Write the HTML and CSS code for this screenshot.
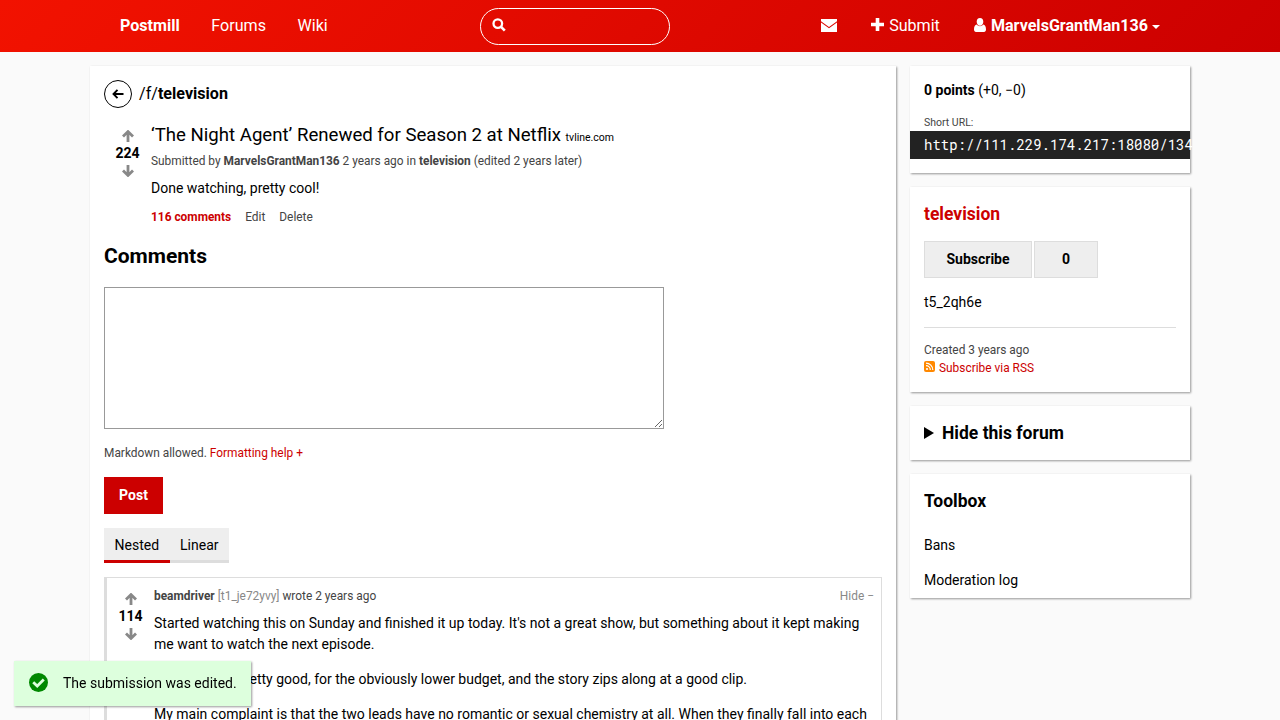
FILE: index.html
```html
<!DOCTYPE html>
<html lang="en">
<head>
<meta charset="utf-8">
<title>‘The Night Agent’ Renewed for Season 2 at Netflix</title>
<link rel="stylesheet" href="styles.css">
</head>
<body>
<svg class="defs" aria-hidden="true">
  <symbol id="arrow-up" viewBox="0 0 12 12"><path d="M6 1.6V12M1 6.6L6 1.6L11 6.6" fill="none" stroke="currentColor" stroke-width="2.8"/></symbol>
  <symbol id="arrow-down" viewBox="0 0 12 12"><path d="M6 10.4V0M1 5.4L6 10.4L11 5.4" fill="none" stroke="currentColor" stroke-width="2.8"/></symbol>
</svg>
<header class="site-nav">
  <nav class="nav-inner">
    <a class="nav-link brand">Postmill</a>
    <a class="nav-link forums">Forums</a>
    <a class="nav-link">Wiki</a>
    <div class="search">
      <svg class="search-icon" viewBox="0 0 14 14"><circle cx="5.8" cy="5.6" r="4.3" fill="none" stroke="currentColor" stroke-width="2.3"/><path d="M8.8 8.6L12.8 12.6" stroke="currentColor" stroke-width="2.6"/></svg>
    </div>
    <div class="nav-user">
      <a class="mail"><svg class="mail-icon" viewBox="0 0 16 13"><path d="M0 0H16V2.2L8 8L0 2.2ZM0 3.4L8 9.2L16 3.4V13H0Z" fill="currentColor"/></svg></a>
      <a class="nav-item submit"><svg class="plus-icon" viewBox="0 0 13 13"><path d="M6.5 0V13M0 6.5H13" stroke="currentColor" stroke-width="3.6"/></svg>Submit</a>
      <a class="nav-item account"><svg class="user-icon" viewBox="0 0 12 14"><path d="M6 0C8.200 0 9.300 1.600 9.300 3.700S8 7.800 6 7.800 2.700 5.800 2.700 3.700 3.800 0 6 0Z" fill="currentColor"/><path d="M2.800 6.500C3.600 7.700 4.700 8.200 6 8.200S8.400 7.700 9.200 6.500C11 6.900 12 8.700 12 11.500C12 13 11.200 14 10 14H2C.800 14 0 13 0 11.500C0 8.700 1 6.900 2.800 6.500Z" fill="currentColor"/></svg><b>MarvelsGrantMan136</b><i class="caret"></i></a>
    </div>
  </nav>
</header>
<div class="site-content">
  <main class="card main">
    <div class="forum-head">
      <span class="back"><svg class="back-icon" viewBox="0 0 12 10"><path d="M5.500 .9L1.500 5L5.500 9.100M1.500 5H11.500" fill="none" stroke="currentColor" stroke-width="1.900"/></svg></span>
      <span class="forum-name">/f/<b>television</b></span>
    </div>
    <article class="submission">
      <div class="vote">
        <svg class="arrow"><use href="#arrow-up"/></svg>
        <b class="score">224</b>
        <svg class="arrow"><use href="#arrow-down"/></svg>
      </div>
      <div class="submission-body">
        <h1 class="title">‘The Night Agent’ Renewed for Season 2 at Netflix <small class="host">tvline.com</small></h1>
        <p class="meta">Submitted by <b>MarvelsGrantMan136</b> 2 years ago in <b>television</b> (edited 2 years later)</p>
        <p class="text">Done watching, pretty cool!</p>
        <p class="actions"><b class="red">116 comments</b><span>Edit</span><span>Delete</span></p>
      </div>
    </article>
    <h2 class="comments-title">Comments</h2>
    <textarea class="comment-input"></textarea>
    <p class="help">Markdown allowed. <a class="red">Formatting help +</a></p>
    <button class="post">Post</button>
    <div class="tabs"><a class="tab active">Nested</a><a class="tab">Linear</a></div>
    <article class="comment">
      <div class="vote">
        <svg class="arrow"><use href="#arrow-up"/></svg>
        <b class="score">114</b>
        <svg class="arrow"><use href="#arrow-down"/></svg>
      </div>
      <div class="comment-body">
        <div class="comment-head"><span><b>beamdriver</b> <span class="muted">[t1_je72yvy]</span> wrote 2 years ago</span><span class="muted">Hide −</span></div>
        <p>Started watching this on Sunday and finished it up today. It's not a great show, but something about it kept making me want to watch the next episode.</p>
        <p>The acting is pretty good, for the obviously lower budget, and the story zips along at a good clip.</p>
        <p>My main complaint is that the two leads have no romantic or sexual chemistry at all. When they finally fall into each</p>
      </div>
    </article>
  </main>
  <aside class="sidebar">
    <section class="card points">
      <p><b>0 points</b> (+0, −0)</p>
      <p class="short-label">Short URL:</p>
      <div class="short-url">http://111.229.174.217:18080/134</div>
    </section>
    <section class="card forum">
      <h2 class="side-title red">television</h2>
      <div class="subscribe"><button class="btn sub">Subscribe</button><span class="btn count">0</span></div>
      <p class="description">t5_2qh6e</p>
      <p class="side-small">Created 3 years ago</p>
      <p class="side-small rss red"><svg class="rss-icon" viewBox="0 0 11 11"><rect width="11" height="11" rx="2" fill="#f80"/><circle cx="3" cy="8" r="1.100" fill="#fff"/><path d="M2 4.700A4.300 4.300 0 0 1 6.300 9M2 2.200A6.800 6.800 0 0 1 8.800 9" fill="none" stroke="#fff" stroke-width="1.200"/></svg>Subscribe via RSS</p>
    </section>
    <section class="card hide-forum"><h2 class="side-title"><i class="triangle"></i>Hide this forum</h2></section>
    <section class="card toolbox">
      <h2 class="side-title">Toolbox</h2>
      <p class="tool">Bans</p>
      <p class="tool">Moderation log</p>
    </section>
  </aside>
</div>
<div class="alert"><svg class="check-icon" viewBox="0 0 18 18"><circle cx="9" cy="9" r="9" fill="#080"/><path d="M4 8.700L7.800 12.400L14 6.200" fill="none" stroke="#dfd" stroke-width="2.600"/></svg>The submission was edited.</div>
</body>
</html>
```
FILE: styles.css
```css
* { box-sizing: border-box; }
html, body { height: 720px; overflow: hidden; }
body { margin: 0; background: #fafafa; color: #000; font: 14px/21px Roboto, sans-serif; }
p, h1, h2 { margin: 0; }
b { font-weight: 700; }
svg { display: block; flex: none; }
.defs { display: none; }
.red { color: #c00; }

.site-nav { height: 52px; background: linear-gradient(135deg, #f21200, #c00); color: #fff; font-size: 16.1px; }
.nav-inner { display: flex; align-items: center; width: 1100px; height: 52px; margin: 0 auto; padding: 0 30px 2px; }
.nav-link { margin-right: 31.5px; }
.brand { font-weight: 700; }
.search { width: 190px; height: 37px; margin: 3px 0 0 120.5px; border: 1px solid #fff; border-radius: 19px; padding: 9px 0 0 11px; }
.search-icon { width: 14px; height: 14px; }
.nav-user { display: flex; align-items: center; margin-left: auto; }
.mail-icon { width: 16px; height: 13px; margin-top: 1px; }
.nav-item { display: flex; align-items: center; }
.submit { margin-left: 34px; }
.plus-icon { width: 13px; height: 13px; margin: 0 5px 2px 0; }
.account { margin-left: 34px; }
.user-icon { width: 12px; height: 14px; margin: 0 5px 1px 0; }
.caret { margin: 3px 0 0 4px; border: 4px solid transparent; border-top-color: #fff; border-bottom: 0; }

.site-content { display: flex; align-items: flex-start; gap: 14px; width: 1100px; margin: 14px auto 0; }
.card { background: #fff; padding: 14px; box-shadow: 1px 1px 2px rgba(0, 0, 0, .4); }
.main { width: 806px; height: 670px; }
.forum-head { display: flex; align-items: center; gap: 7px; height: 28px; font-size: 16.1px; }
.forum-name { padding-bottom: 2px; }
.back { display: flex; align-items: center; justify-content: center; width: 28px; height: 28px; border: 1px solid #000; border-radius: 50%; }
.back-icon { width: 12px; height: 10px; }
.submission { display: flex; margin-top: 14px; }
.vote { display: flex; flex-direction: column; align-items: center; width: 47px; }
.arrow { width: 12px; height: 12px; color: #888; }
.score { line-height: 17px; margin: 3px 0; }
.submission .vote { padding-top: 8px; }
.title { padding-top: 1px; font-size: 18.62px; font-weight: 400; line-height: 25px; }
.host { font-size: 10.5px; }
.meta { margin-top: 2px; font-size: 11.9px; line-height: 18px; color: #444; }
.text { margin-top: 8px; }
.actions { display: flex; gap: 14px; margin-top: 9px; font-size: 11.9px; line-height: 18px; color: #444; }
.comments-title { margin-top: 16px; font-size: 21px; line-height: 28px; }
.comment-input { display: block; width: 560px; height: 142px; margin-top: 17px; border: 1px solid #999; }
.help { margin-top: 15px; font-size: 11.9px; line-height: 18px; color: #444; }
.post { display: block; width: 59px; height: 37px; margin-top: 15px; padding: 0; border: 0; background: #c00; color: #fff; font: 700 14px/21px Roboto, sans-serif; }
.tabs { display: flex; margin-top: 14px; }
.tab { height: 35px; padding: 7px 10.5px 4px; background: #eee; border-bottom: 3px solid #ddd; }
.tab.active { border-color: #c00; }
.comment { display: flex; height: 150px; margin-top: 14px; border: 1px solid #ddd; border-left-width: 3px; padding-top: 9px; }
.comment .vote { padding-top: 6px; }
.comment-body { flex: 1; padding-right: 7px; }
.comment-head { display: flex; justify-content: space-between; font-size: 11.9px; line-height: 18px; color: #444; margin-bottom: 8px; }
.muted { color: #888; }
.comment-body p + p { margin-top: 14px; }

.sidebar { display: flex; flex-direction: column; gap: 14px; width: 280px; }
.points { height: 107px; }
.short-label { margin-top: 13px; font-size: 10.5px; line-height: 17px; color: #444; }
.short-url { margin: 0 -14px; padding: 3px 14px 4px; background: #222; color: #fff; font-family: "Roboto Mono", "DejaVu Sans Mono", monospace; white-space: nowrap; }
.side-title { font-size: 17.5px; line-height: 26px; }
.forum { height: 205px; }
.subscribe { display: flex; gap: 2px; margin-top: 14px; }
.btn { height: 37px; border: 1px solid #ddd; background: #eee; color: #000; font: 700 14px/35px Roboto, sans-serif; text-align: center; padding: 0; }
.sub { width: 108px; }
.count { width: 64px; }
.description { margin-top: 14px; padding-bottom: 14px; border-bottom: 1px solid #ddd; margin-bottom: 13px; }
.side-small { font-size: 11.9px; line-height: 18px; color: #444; }
.rss { display: flex; align-items: center; gap: 4px; color: #c00; }
.rss-icon { width: 11px; height: 11px; margin-bottom: 3px; }
.hide-forum { height: 54px; }
.triangle { display: inline-block; margin-right: 8px; border: 6px solid transparent; border-left: 10px solid #000; border-right: 0; }
.toolbox { height: 124px; }
.tool { margin-top: 14px; }
.side-title + .tool { margin-top: 21px; }

.alert { position: fixed; left: 14px; bottom: 14px; display: flex; align-items: center; width: 237px; height: 45px; padding: 0 0 0 15px; background: #dfd; box-shadow: 1px 1px 2px rgba(0, 0, 0, .4); white-space: nowrap; }
.check-icon { width: 19px; height: 19px; margin: 0 15px 3px 0; }
```
